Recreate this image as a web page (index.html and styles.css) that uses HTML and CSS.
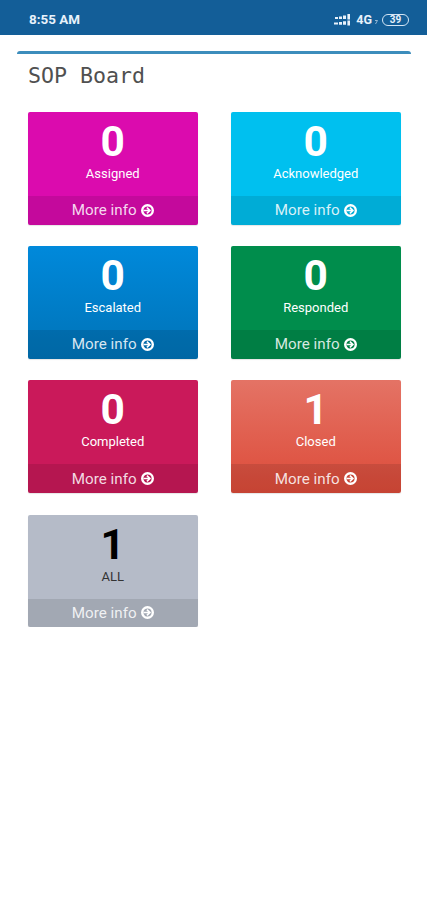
FILE: index.html
```html
<!DOCTYPE html>
<html lang="en">
<head>
<meta charset="utf-8">
<title>SOP Board</title>
<link rel="stylesheet" href="styles.css">
</head>
<body>
<svg width="0" height="0" class="defs">
  <symbol id="go" viewBox="0 0 13 13">
    <circle cx="6.5" cy="6.5" r="5.3" fill="none" stroke="currentColor" stroke-width="2.4"/>
    <path d="M2.5 6.5h6M5.9 3.6l3 2.9-3 2.9" fill="none" stroke="currentColor" stroke-width="1.6"/>
  </symbol>
</svg>
<header class="status">
  <span class="time">8:55 AM</span>
  <div class="indicators">
    <svg class="signal" width="17" height="12" viewBox="0 0 17 12" fill="currentColor">
      <path d="M1 3h3v2H1zM5 2.4h3V5H5zM9 1.6h3V5H9zM13.4 0h2.6v5.4h-2.6zM0 8.6h4v2H0zM5 8h3v2.8H5zM9 7.2h3v3.6H9zM13.4 6.4h2.6v5h-2.6z"/>
    </svg>
    <span class="net">4G</span>
    <svg class="tick" width="4" height="6" viewBox="0 0 4 6"><path d="M1 1.5h2.5L1.5 5" fill="none" stroke="currentColor"/></svg>
    <span class="battery"><span class="level">39</span></span>
  </div>
</header>
<main class="panel">
  <h1>SOP Board</h1>
  <div class="grid">
    <section class="card assigned"><strong>0</strong><p>Assigned</p><a>More info <svg><use href="#go"/></svg></a></section>
    <section class="card acknowledged"><strong>0</strong><p>Acknowledged</p><a>More info <svg><use href="#go"/></svg></a></section>
    <section class="card escalated"><strong>0</strong><p>Escalated</p><a>More info <svg><use href="#go"/></svg></a></section>
    <section class="card responded"><strong>0</strong><p>Responded</p><a>More info <svg><use href="#go"/></svg></a></section>
    <section class="card completed"><strong>0</strong><p>Completed</p><a>More info <svg><use href="#go"/></svg></a></section>
    <section class="card closed"><strong>1</strong><p>Closed</p><a>More info <svg><use href="#go"/></svg></a></section>
    <section class="card all"><strong>1</strong><p>ALL</p><a>More info <svg><use href="#go"/></svg></a></section>
  </div>
</main>
</body>
</html>
```
FILE: styles.css
```css
* { box-sizing: border-box; }
body { margin: 0; background: #fff; font-family: Roboto, sans-serif; }
.defs { display: block; }
.status {
  height: 35px;
  padding: 4px 18px 0 29px;
  display: flex;
  align-items: center;
  justify-content: space-between;
  background: #135e98;
  color: #e8f2fb;
}
.time { font-size: 13.4px; font-weight: 700; }
.indicators { display: flex; align-items: center; }
.net { margin-left: 5px; font-size: 12.5px; font-weight: 700; }
.tick { margin: 5px 4px 0 2px; opacity: .6; }
.battery {
  width: 27px;
  height: 12px;
  border: 1.5px solid #d3e6f6;
  border-radius: 6px;
  display: flex;
  align-items: center;
  justify-content: center;
}
.level { font-size: 10px; font-weight: 700; line-height: 9px; }
.panel {
  margin: 16px 16px 0 17px;
  padding: 0 10px 0 11px;
  border-top: 3px solid #3c8dbc;
  border-radius: 3px;
}
h1 {
  margin: 0;
  height: 58px;
  padding-top: 9px;
  font: 400 21.6px/26px "DejaVu Sans Mono", monospace;
  color: #505050;
}
.grid {
  display: grid;
  grid-template-columns: 169.5px 169.5px;
  gap: 21.7px 33.5px;
}
.card {
  height: 112.5px;
  border-radius: 2px;
  overflow: hidden;
  display: flex;
  flex-direction: column;
  align-items: center;
  color: #fff;
  box-shadow: 0 1px 1px rgba(0, 0, 0, .1);
}
.card strong { margin-top: 8px; font-size: 42.5px; line-height: 44px; }
.card p { margin: 1px 0 0; font-size: 13px; line-height: 18px; }
.card a {
  margin-top: auto;
  width: 100%;
  height: 28.5px;
  display: flex;
  align-items: center;
  justify-content: center;
  gap: 4px;
  background: rgba(0, 0, 0, .1);
  color: rgba(255, 255, 255, .85);
  font-size: 15.2px;
}
.card svg { width: 13px; height: 13px; color: #fff; }
.assigned { background: #db0bae; }
.acknowledged { background: #00c0ef; }
.escalated { background: linear-gradient(#0089db, #0073b7); }
.responded { background: #008d4c; }
.completed { background: #ca195a; }
.closed { background: linear-gradient(#e47365, #dd4b39); }
.all { background: #b5bbc8; }
.all strong { color: #000; }
.all p { color: #333; }
```
